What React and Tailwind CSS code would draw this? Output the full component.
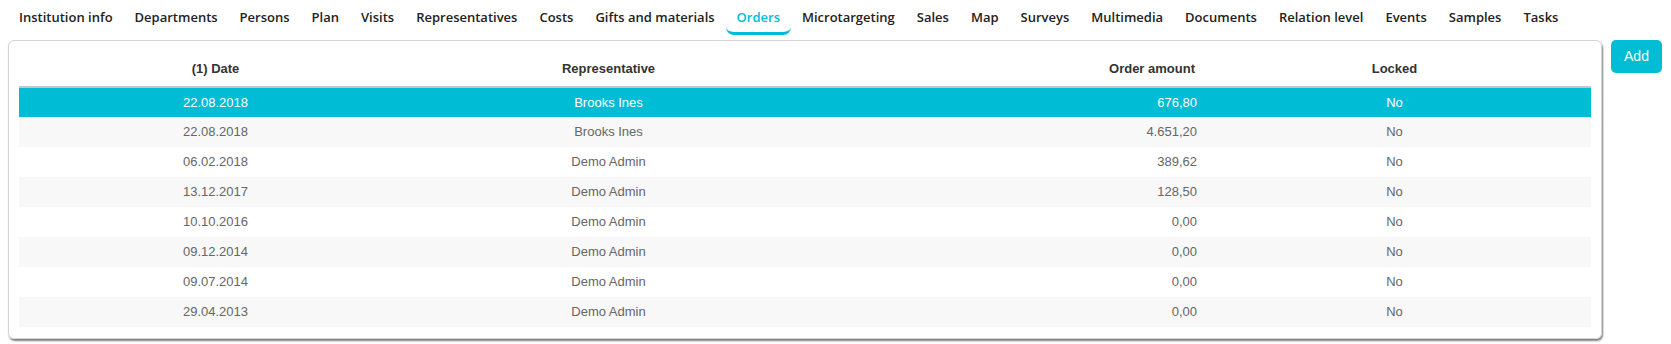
import React from "react";

const tabs = [
  "Institution info", "Departments", "Persons", "Plan", "Visits", "Representatives",
  "Costs", "Gifts and materials", "Orders", "Microtargeting", "Sales", "Map",
  "Surveys", "Multimedia", "Documents", "Relation level", "Events", "Samples", "Tasks",
];

const orders = [
  { date: "22.08.2018", rep: "Brooks Ines", amount: "676,80", locked: "No" },
  { date: "22.08.2018", rep: "Brooks Ines", amount: "4.651,20", locked: "No" },
  { date: "06.02.2018", rep: "Demo Admin", amount: "389,62", locked: "No" },
  { date: "13.12.2017", rep: "Demo Admin", amount: "128,50", locked: "No" },
  { date: "10.10.2016", rep: "Demo Admin", amount: "0,00", locked: "No" },
  { date: "09.12.2014", rep: "Demo Admin", amount: "0,00", locked: "No" },
  { date: "09.07.2014", rep: "Demo Admin", amount: "0,00", locked: "No" },
  { date: "29.04.2013", rep: "Demo Admin", amount: "0,00", locked: "No" },
];

export default function App() {
  return (
    <div className="w-[1671px] h-[344px] bg-white overflow-hidden">
      {/* Tabs */}
      <nav className="flex items-start h-[36px] pl-[8px] font-['Open_Sans',sans-serif] text-[13px] font-semibold">
        {tabs.map(t => {
          const active = t === "Orders";
          return (
            <div
              key={t}
              className={`px-[11px] h-[35px] pt-[8px] whitespace-nowrap ${
                active ? "text-[#00bcd4] border-b-[3px] border-[#00bcd4] rounded-b-[8px]" : "text-[#222]"
              }`}
            >
              {t}
            </div>
          );
        })}
      </nav>

      {/* Content */}
      <div className="flex items-start pl-[8px] pr-[9px] mt-[4px]">
        <div className="flex-1 border border-[#d4d4d4] rounded-[6px] shadow-[1px_2px_2px_rgba(0,0,0,0.5)] pt-[10px] pb-[11px] px-[10px]">
          <table className="w-full table-fixed border-collapse font-['Liberation_Sans',Arial,sans-serif] text-[13px]">
            <thead>
              <tr className="h-[36px] border-b-2 border-[#c3c6c9] text-[#333]">
                <th className="font-bold text-center">(1) Date</th>
                <th className="font-bold text-center">Representative</th>
                <th className="font-bold text-right pr-[3px]">Order amount</th>
                <th className="font-bold text-center">Locked</th>
              </tr>
            </thead>
            <tbody>
              {orders.map((o, i) => {
                const sel = i === 0;
                const bg = sel ? "bg-[#00bcd4] text-white" : i % 2 === 1 ? "bg-[#f8f8f8] text-[#666]" : "bg-white text-[#666]";
                return (
                  <tr key={i} className={`h-[30px] ${bg}`}>
                    <td className="text-center">{o.date}</td>
                    <td className="text-center">{o.rep}</td>
                    <td className="text-right pr-[1px]">{o.amount}</td>
                    <td className="text-center">{o.locked}</td>
                  </tr>
                );
              })}
            </tbody>
          </table>
        </div>
        <button className="ml-[9px] w-[51px] h-[33px] rounded-[5px] bg-[#00bcd4] text-white font-['Liberation_Sans',Arial,sans-serif] text-[14px]">
          Add
        </button>
      </div>
    </div>
  );
}
